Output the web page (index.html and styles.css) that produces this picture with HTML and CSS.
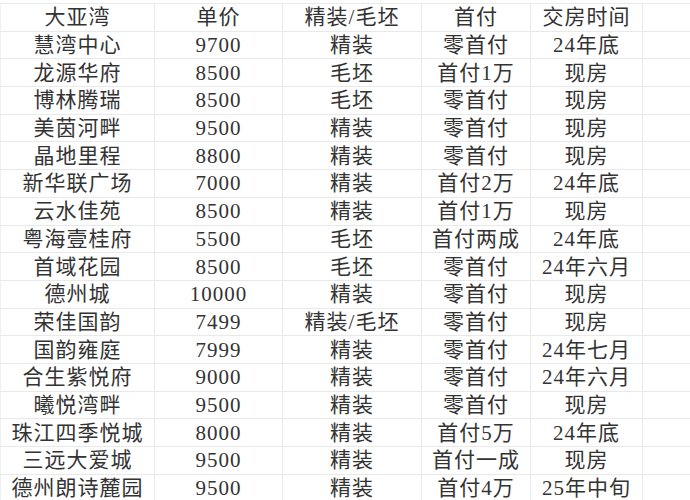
FILE: index.html
```html
<!DOCTYPE html>
<html lang="zh-CN">
<head>
<meta charset="utf-8">
<title>大亚湾</title>
<link rel="stylesheet" href="styles.css">
</head>
<body>
<div class="sheet">
<table class="grid">
<colgroup>
<col class="c1"><col class="c2"><col class="c3"><col class="c4"><col class="c5"><col class="c6">
</colgroup>
<tbody>
<tr><td>大亚湾</td><td>单价</td><td>精装/毛坯</td><td>首付</td><td>交房时间</td><td></td></tr>
<tr><td>慧湾中心</td><td>9700</td><td>精装</td><td>零首付</td><td>24年底</td><td></td></tr>
<tr><td>龙源华府</td><td>8500</td><td>毛坯</td><td>首付1万</td><td>现房</td><td></td></tr>
<tr><td>博林腾瑞</td><td>8500</td><td>毛坯</td><td>零首付</td><td>现房</td><td></td></tr>
<tr><td>美茵河畔</td><td>9500</td><td>精装</td><td>零首付</td><td>现房</td><td></td></tr>
<tr><td>晶地里程</td><td>8800</td><td>精装</td><td>零首付</td><td>现房</td><td></td></tr>
<tr><td>新华联广场</td><td>7000</td><td>精装</td><td>首付2万</td><td>24年底</td><td></td></tr>
<tr><td>云水佳苑</td><td>8500</td><td>精装</td><td>首付1万</td><td>现房</td><td></td></tr>
<tr><td>粤海壹桂府</td><td>5500</td><td>毛坯</td><td>首付两成</td><td>24年底</td><td></td></tr>
<tr><td>首域花园</td><td>8500</td><td>毛坯</td><td>零首付</td><td>24年六月</td><td></td></tr>
<tr><td>德州城</td><td>10000</td><td>精装</td><td>零首付</td><td>现房</td><td></td></tr>
<tr><td>荣佳国韵</td><td>7499</td><td>精装/毛坯</td><td>零首付</td><td>现房</td><td></td></tr>
<tr><td>国韵雍庭</td><td>7999</td><td>精装</td><td>零首付</td><td>24年七月</td><td></td></tr>
<tr><td>合生紫悦府</td><td>9000</td><td>精装</td><td>零首付</td><td>24年六月</td><td></td></tr>
<tr><td>曦悦湾畔</td><td>9500</td><td>精装</td><td>零首付</td><td>现房</td><td></td></tr>
<tr><td>珠江四季悦城</td><td>8000</td><td>精装</td><td>首付5万</td><td>24年底</td><td></td></tr>
<tr><td>三远大爱城</td><td>9500</td><td>精装</td><td>首付一成</td><td>现房</td><td></td></tr>
<tr><td>德州朗诗麓园</td><td>9500</td><td>精装</td><td>首付4万</td><td>25年中旬</td><td></td></tr>
</tbody>
</table>
</div>
</body>
</html>
```

FILE: styles.css
```css
html, body {
  margin: 0;
  padding: 0;
  background: #ffffff;
}
body {
  width: 690px;
  height: 500px;
  overflow: hidden;
}
.sheet {
  padding-top: 3px;
}
.grid {
  border-collapse: collapse;
  table-layout: fixed;
  width: 690px;
  font-family: "Liberation Serif", "Noto Sans CJK SC", serif;
  font-size: 21px;
  color: #333333;
}
.c1 { width: 154px; }
.c2 { width: 128px; }
.c3 { width: 139px; }
.c4 { width: 109px; }
.c5 { width: 112px; }
.c6 { width: 48px; }
.grid td {
  height: 26.7px;
  padding: 0;
  text-align: center;
  vertical-align: middle;
  white-space: nowrap;
  line-height: 26px;
  letter-spacing: 1px;
  border: 1px solid #e9e9e9;
}
.grid td:first-child {
  border-left-color: #f0f0f0;
}
```
